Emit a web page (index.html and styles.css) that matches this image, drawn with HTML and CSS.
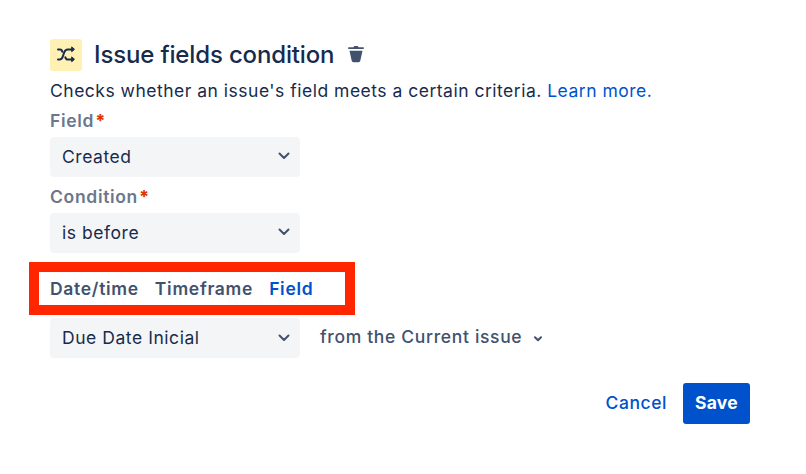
FILE: index.html
```html
<!DOCTYPE html>
<html lang="en">
<head>
    <meta charset="UTF-8">
    <meta name="viewport" content="width=device-width, initial-scale=1.0">
    <title>Issue fields condition</title>
    <link rel="stylesheet" href="styles.css">
</head>
<body>
    <form class="condition">
        <header class="title-row">
            <span class="badge">
                <svg width="20" height="18" viewBox="0 0 20 18" fill="none" stroke="#172b4d" stroke-width="2" stroke-linecap="round" stroke-linejoin="round">
                    <path d="M2 3.500h2c1.300 0 2 .8 2.300 2.300M9.300 11.200c.4 1.700 1.200 2.300 2.700 2.300h5M2 13.500h1.500c2 0 2.700-1 3.300-3l1.400-4c.7-2 1.600-3 3.600-3H17"/>
                    <path d="M15.700 1.300v4.400l2.500-2.200zM15.700 11.300v4.400l2.500-2.200z" fill="#172b4d" stroke-width="1"/>
                </svg>
            </span>
            <h1>Issue fields condition</h1>
            <svg class="trash" width="16" height="17" viewBox="0 0 16 17" fill="#42526e">
                <path d="M1 1.200h4.500Q5.700 0 7 0h2q1.300 0 1.500 1.200H15q1 0 1 .9t-1 .9H1q-1 0-1-.9t1-.9z"/>
                <path d="M1.500 4.800h13l-2.200 10q-.3 1.400-1.700 1.400H5.400q-1.400 0-1.700-1.400z"/>
            </svg>
        </header>

        <p class="description">Checks whether an issue's field meets a certain criteria. <a href="#">Learn more.</a></p>

        <div class="label">Field<span class="required">*</span></div>
        <div class="select">
            <span>Created</span>
            <svg class="chevron" width="12" height="8" viewBox="0 0 12 8"><path d="M1.500 1.500L6 6l4.500-4.500"/></svg>
        </div>

        <div class="label label-condition">Condition<span class="required">*</span></div>
        <div class="select">
            <span>is before</span>
            <svg class="chevron" width="12" height="8" viewBox="0 0 12 8"><path d="M1.500 1.500L6 6l4.500-4.500"/></svg>
        </div>

        <div class="tabs">
            <span>Date/time</span>
            <span>Timeframe</span>
            <span class="active">Field</span>
            <div class="highlight"></div>
        </div>

        <div class="compare-row">
            <div class="select">
                <span>Due Date Inicial</span>
                <svg class="chevron" width="12" height="8" viewBox="0 0 12 8"><path d="M1.500 1.500L6 6l4.500-4.500"/></svg>
            </div>
            <div class="source">
                <span>from the Current issue</span>
                <svg class="chevron chevron-small" width="8" height="6" viewBox="0 0 8 6"><path d="M1 1.300l3 2.900 3-2.900"/></svg>
            </div>
        </div>

        <div class="actions">
            <a class="cancel" href="#">Cancel</a>
            <button class="save" type="button">Save</button>
        </div>
    </form>
</body>
</html>
```
FILE: styles.css
```css
* {
    box-sizing: border-box;
}
body {
    margin: 0;
    background-color: #fff;
    color: #172b4d;
    font-family: Inter, "Liberation Sans", sans-serif;
    font-size: 17.5px;
    line-height: 24px;
    white-space: nowrap;
}
a {
    color: #0052cc;
    text-decoration: none;
}
.condition {
    width: 700px;
    margin: 39px 0 0 50px;
}
.title-row {
    display: flex;
    align-items: center;
    height: 32px;
}
.badge {
    display: flex;
    align-items: center;
    justify-content: center;
    width: 32px;
    height: 32px;
    margin-right: 12px;
    border-radius: 3px;
    background-color: #fff0b3;
}
h1 {
    width: 242px;
    margin: 0;
    font-size: 24px;
    font-weight: 500;
    letter-spacing: -0.15px;
}
.trash {
    margin-left: 12px;
    margin-bottom: 2px;
}
.description {
    height: 24px;
    margin: 8px 0 0;
    letter-spacing: 0.5px;
}
.label {
    display: flex;
    height: 24px;
    margin-top: 6px;
    color: #6b778c;
    font-weight: 600;
    letter-spacing: 0.68px;
}
.label-condition {
    margin-top: 8px;
}
.required {
    margin-left: 1px;
    color: #de350b;
    font-weight: 800;
}
.select {
    display: flex;
    align-items: center;
    justify-content: space-between;
    width: 250px;
    height: 40px;
    margin-top: 4px;
    padding: 0 10px 0 12px;
    border-radius: 4px;
    background-color: #f4f5f7;
    letter-spacing: 0.55px;
}
.chevron {
    margin-bottom: 2px;
    fill: none;
    stroke: #42526e;
    stroke-width: 2;
    stroke-linecap: round;
    stroke-linejoin: round;
}
.chevron-small {
    margin: 3px 0 0;
}
.tabs {
    position: relative;
    display: flex;
    align-items: center;
    gap: 16px;
    height: 53px;
    margin-top: 9px;
    color: #42526e;
    font-weight: 600;
    letter-spacing: 0.7px;
}
.active {
    color: #0052cc;
}
/* callout frame drawn around the tabs */
.highlight {
    position: absolute;
    top: 0;
    left: -21px;
    width: 326px;
    height: 53px;
    border: 10px solid #ff2600;
}
.compare-row {
    display: flex;
    gap: 20px;
    margin-top: 3px;
}
.compare-row .select {
    margin-top: 0;
}
.compare-row .select .chevron {
    margin-bottom: 0;
}
.source {
    display: flex;
    align-items: center;
    gap: 12px;
    height: 38px;
    color: #42526e;
    font-weight: 500;
    letter-spacing: 0.67px;
}
.actions {
    display: flex;
    align-items: center;
    justify-content: flex-end;
    gap: 16px;
    margin-top: 25px;
}
.cancel {
    padding-bottom: 2px;
    font-weight: 500;
    letter-spacing: 0.55px;
}
.save {
    width: 67px;
    height: 41px;
    padding: 0 0 2px;
    border: 0;
    border-radius: 3px;
    background-color: #0052cc;
    color: #fff;
    font: inherit;
    font-weight: 700;
    letter-spacing: 0.3px;
}
```
